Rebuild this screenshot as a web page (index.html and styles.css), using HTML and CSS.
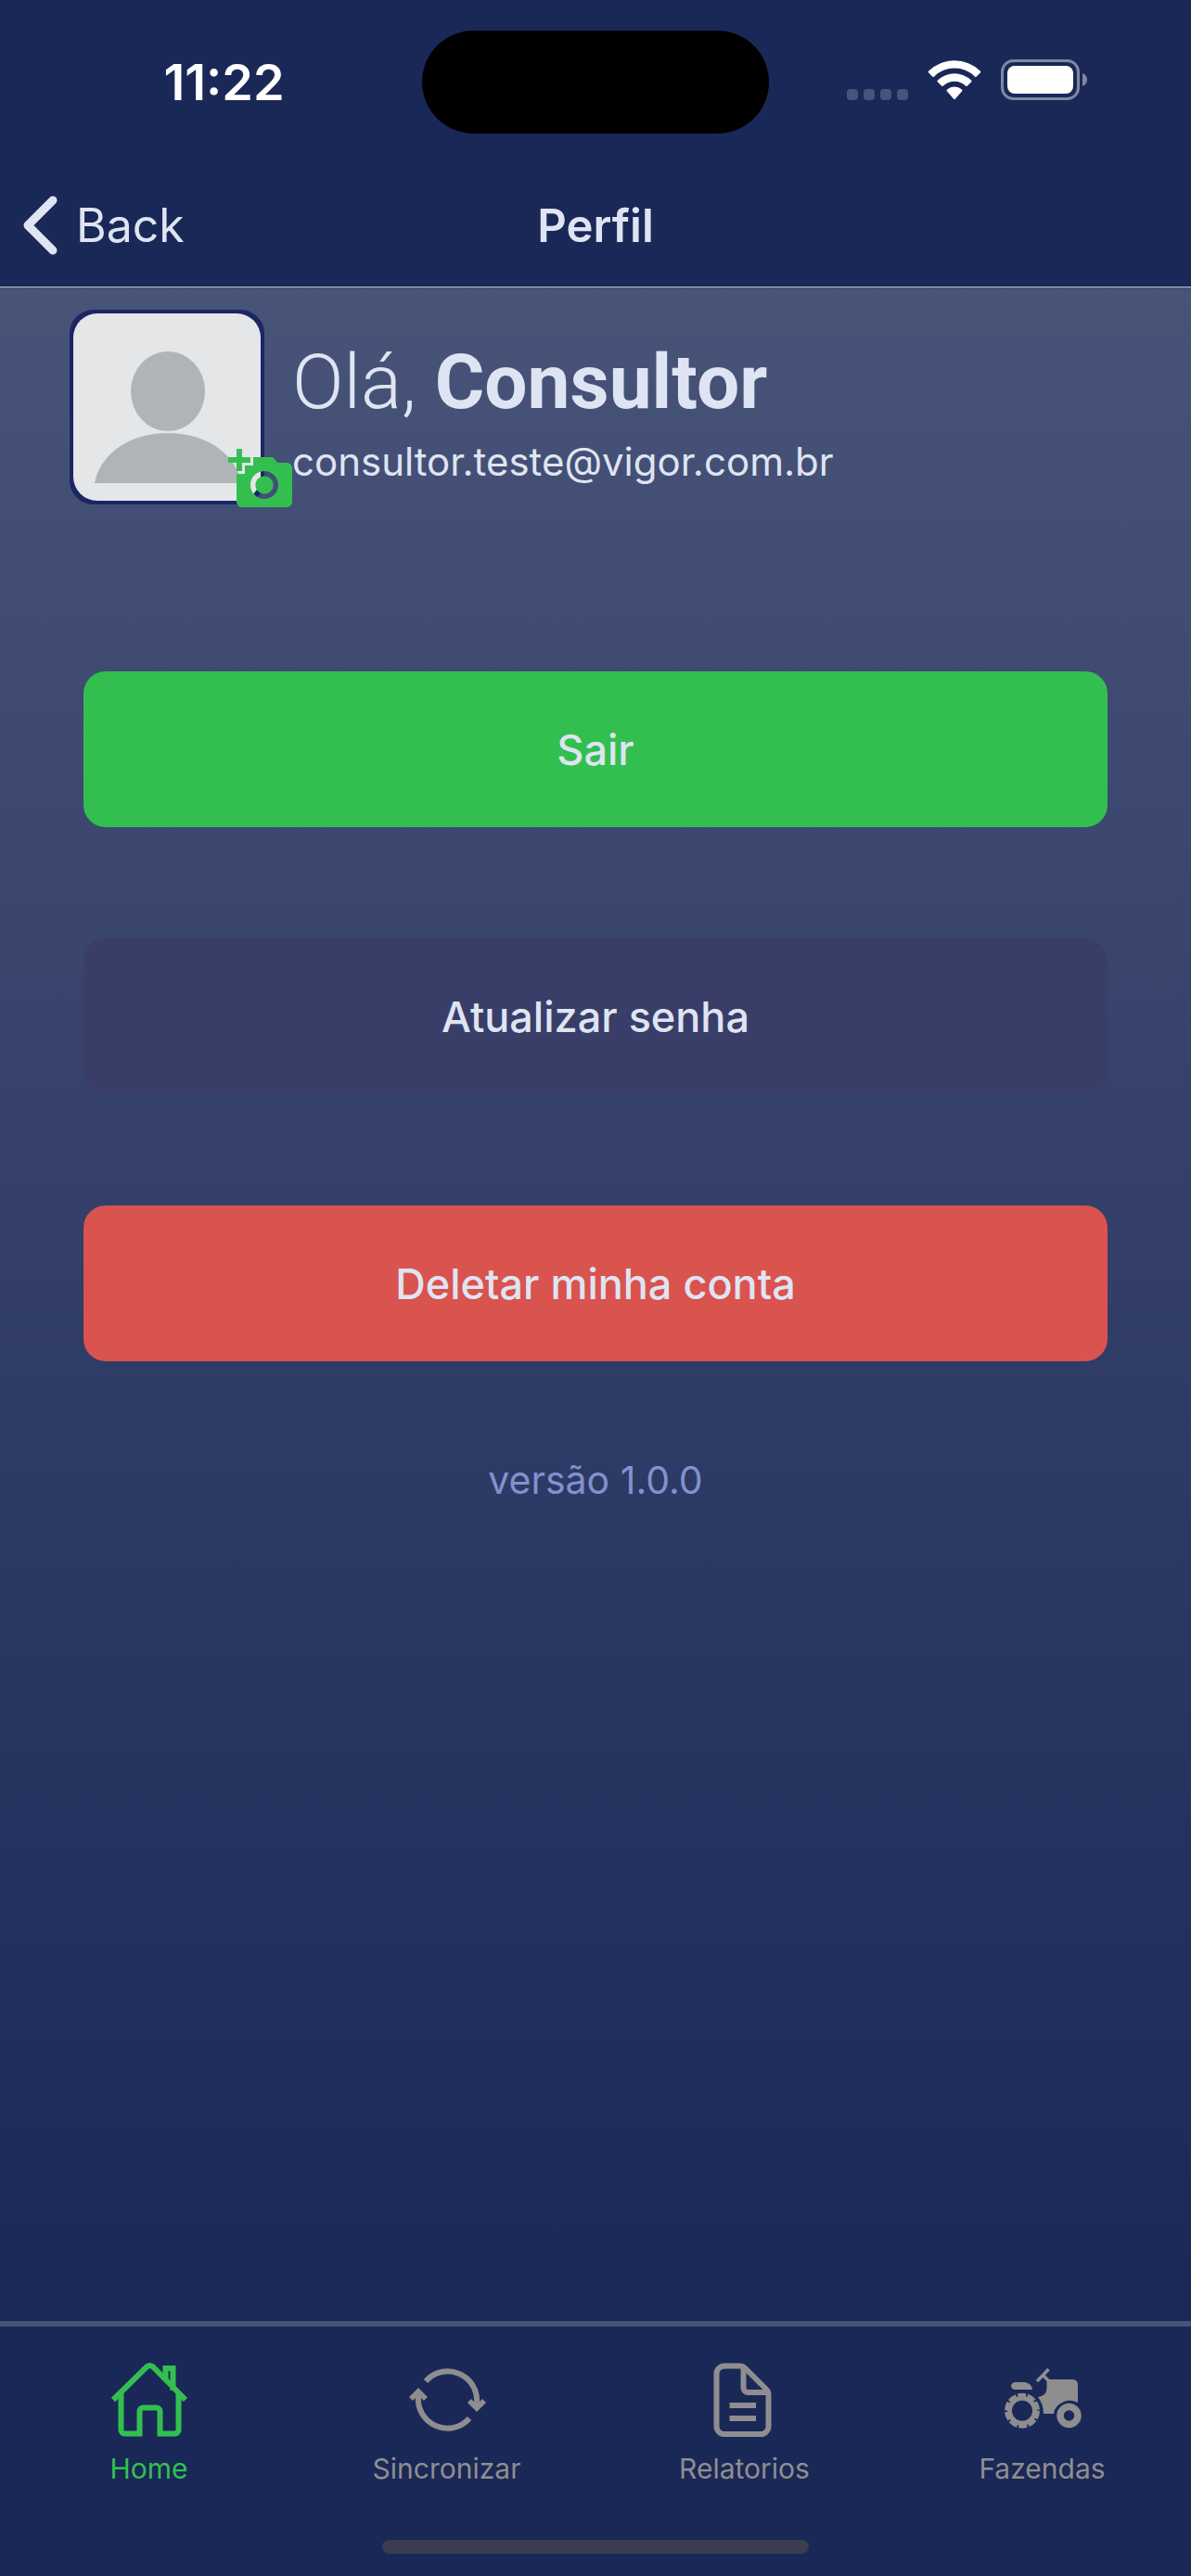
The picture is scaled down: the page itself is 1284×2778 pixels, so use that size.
FILE: index.html
```html
<!DOCTYPE html>
<html lang="pt-BR">
<head>
    <meta charset="UTF-8">
    <meta name="viewport" content="width=device-width, initial-scale=1.0">
    <title>Perfil</title>
    <link rel="stylesheet" href="styles.css">
</head>
<body>
    <header class="header">
        <div class="status-bar">
            <span class="time">11:22</span>
            <div class="island"></div>
            <div class="status-icons">
                <svg class="signal" width="66" height="12" viewBox="0 0 66 12">
                    <rect x="0" width="12" height="12" rx="4"/>
                    <rect x="18" width="12" height="12" rx="4"/>
                    <rect x="36" width="12" height="12" rx="4"/>
                    <rect x="54" width="12" height="12" rx="4"/>
                </svg>
                <svg class="wifi" width="58" height="44" viewBox="0 0 58 44">
                    <path d="M1.200 12.500a40 40 0 0 1 55.600 0q1 1 0 2l-4 4q-1 1-2 0a31 31 0 0 0-43.600 0q-1 1-2 0l-4-4q-1-1 0-2z"/>
                    <path d="M11 22.500a26 26 0 0 1 36 0q1 1 0 2l-4 4q-1 1-2 0a17.500 17.500 0 0 0-24 0q-1 1-2 0l-4-4q-1-1 0-2z"/>
                    <path d="M21 32.500a12 12 0 0 1 16 0q1 1 0 2l-7 8q-1 1-2 0l-7-8q-1-1 0-2z"/>
                </svg>
                <svg class="battery" width="94" height="44" viewBox="0 0 94 44">
                    <rect x="1.500" y="1.500" width="82" height="41" rx="12" class="battery-shell"/>
                    <path d="M88 15q5 2 5 7t-5 7z" class="battery-tip"/>
                    <rect x="7" y="7" width="71" height="30" rx="8"/>
                </svg>
            </div>
        </div>
        <nav class="nav-bar">
            <a href="#" class="back">
                <svg width="38" height="66" viewBox="0 0 38 66"><path d="M33 6L6 33l27 27"/></svg>
                Back
            </a>
            <h1 class="title">Perfil</h1>
        </nav>
    </header>

    <main class="content">
        <section class="profile">
            <div class="avatar">
                <svg class="avatar-picture" viewBox="0 0 202 202">
                    <rect width="202" height="202" fill="#e5e6e8"/>
                    <ellipse cx="102" cy="84" rx="40" ry="43"/>
                    <path d="M23 183C29 151 61 129 102 129s73 22 79 54z"/>
                </svg>
                <button class="photo-btn" aria-label="Alterar foto">
                    <svg width="72" height="72" viewBox="0 0 24 24"><path d="M3 4V1h2v3h3v2H5v3H3V6H0V4h3zm3 6V7h3V4h7l1.830 2H21c1.100 0 2 .9 2 2v12c0 1.100-.9 2-2 2H5c-1.100 0-2-.9-2-2V10h3zm7 9c2.760 0 5-2.240 5-5s-2.240-5-5-5-5 2.240-5 5 2.240 5 5 5zm-3.200-5c0 1.770 1.430 3.200 3.200 3.200s3.200-1.430 3.200-3.200-1.430-3.200-3.200-3.200-3.200 1.430-3.200 3.200z"/></svg>
                </button>
            </div>
            <div class="profile-info">
                <h2 class="greeting">Olá, <strong>Consultor</strong></h2>
                <p class="email">consultor.teste@vigor.com.br</p>
            </div>
        </section>

        <div class="actions">
            <button class="btn btn-green">Sair</button>
            <button class="btn btn-dark">Atualizar senha</button>
            <button class="btn btn-red">Deletar minha conta</button>
        </div>
        <p class="version">versão 1.0.0</p>
    </main>

    <footer class="tab-bar">
        <nav class="tabs">
            <a href="#" class="tab active">
                <svg class="icon" viewBox="0 0 84 84">
                    <path d="M3 42L39.500 6q3-2 6 0L81 42"/>
                    <path d="M11.500 34v40.500a4 4 0 0 0 4 4h16V54.500a4 4 0 0 1 4-4h14a4 4 0 0 1 4 4v24h16a4 4 0 0 0 4-4V34"/>
                    <path d="M59.500 20V8h8v24"/>
                </svg>
                Home
            </a>
            <a href="#" class="tab">
                <svg class="icon" viewBox="0 0 84 84">
                    <path d="M19 22A31.500 31.500 0 0 1 74 46"/>
                    <path d="M66 62A31.500 31.500 0 0 1 11 38"/>
                    <path class="fill" d="M68 41l-4 4 10 10 10-10-4-4-3 3h-6zM17 43l4-4-10-10-10 10 4 4 3-3h6z"/>
                </svg>
                Sincronizar
            </a>
            <a href="#" class="tab">
                <svg class="icon" viewBox="0 0 84 84">
                    <path d="M20 5.500h17q3 0 5 2l23 23q2.500 2.500 2.500 5.500v34.500a8.500 8.500 0 0 1-8.500 8.500H20a8.500 8.500 0 0 1-8.500-8.500V14A8.500 8.500 0 0 1 20 5.500z"/>
                    <path d="M40.500 6v23a5 5 0 0 0 5 5H67M25.500 48H54M25.500 62H54"/>
                </svg>
                Relatorios
            </a>
            <a href="#" class="tab">
                <svg class="icon" viewBox="0 0 84 84">
                    <circle cx="20" cy="53.700" r="13.500" stroke-width="5"/>
                    <circle cx="20" cy="53.700" r="17" stroke-width="4" stroke-dasharray="8.900 1.780"/>
                    <circle cx="70.500" cy="59" r="9.500" stroke-width="7.500"/>
                    <path d="M48.500 9L36 22M43 16l6 6" stroke-width="3.500"/>
                    <path class="fill" d="M12 23h11q7 1 8 8H12q-4-1-4-4t4-4z"/>
                    <path class="fill" d="M46.500 20H74q6 0 6 6v19q-8-4-15-1-10 4-11 13H43q0-10-6-18 9-1 9.500-9z"/>
                </svg>
                Fazendas
            </a>
        </nav>
        <div class="home-indicator"></div>
    </footer>
</body>
</html>
```
FILE: styles.css
```css
/* Global styles */
* {
    box-sizing: border-box;
}

body {
    margin: 0;
    min-height: 100vh;
    display: flex;
    flex-direction: column;
    font-family: Inter, sans-serif;
    color: #dfe4f2;
    background-color: #1a2857;
}

h1, h2, p {
    margin: 0;
}

a {
    color: inherit;
    text-decoration: none;
}

button {
    border: none;
    font-family: inherit;
    color: inherit;
    cursor: pointer;
}

/* Status bar */
.header {
    border-bottom: 1px solid #b9bdcb;
}

.status-bar {
    display: grid;
    grid-template-columns: 1fr auto 1fr;
    align-items: center;
    justify-items: center;
    height: 177px;
    padding: 0 28px;
}

.time {
    font-size: 54px;
    font-weight: 600;
    color: #fff;
}

.island {
    width: 374px;
    height: 111px;
    border-radius: 56px;
    background-color: #000;
}

.status-icons {
    display: flex;
    align-items: flex-end;
    gap: 21px;
    padding-bottom: 6px;
    fill: #fff;
}

.signal {
    fill: #48537a;
}

.battery-shell {
    fill: none;
    stroke: #7f87a3;
    stroke-width: 3;
}

.battery-tip {
    fill: #7f87a3;
}

/* Navigation bar */
.nav-bar {
    display: grid;
    grid-template-columns: 1fr auto 1fr;
    align-items: center;
    height: 132px;
    padding: 0 24px;
}

.back {
    display: flex;
    align-items: center;
    gap: 20px;
    font-size: 50px;
}

.back svg {
    fill: none;
    stroke: #dfe4f2;
    stroke-width: 9;
    stroke-linecap: round;
    stroke-linejoin: round;
}

.title {
    font-size: 49px;
    font-weight: 600;
}

/* Profile */
.content {
    flex: 1;
    padding-top: 24px;
    background: linear-gradient(#485378, #1a2857);
}

.profile {
    display: flex;
    gap: 30px;
    padding: 0 75px;
}

.avatar {
    position: relative;
    width: 210px;
    height: 210px;
    border: 4px solid #1c2666;
    border-radius: 26px;
    background-color: #1c2666;
}

.avatar-picture {
    display: block;
    border-radius: 26px;
    fill: #afb4b8;
}

.photo-btn {
    position: absolute;
    right: -37px;
    bottom: -13px;
    padding: 0;
    background: none;
}

.photo-btn svg {
    display: block;
    fill: #33bf50;
}

.profile-info {
    padding-top: 30px;
}

.greeting {
    font-family: Roboto, sans-serif;
    font-size: 82px;
    font-weight: 300;
    line-height: 96px;
}

.greeting strong {
    font-weight: 700;
}

.email {
    font-size: 42px;
    line-height: 76px;
}

/* Buttons */
.actions {
    display: flex;
    flex-direction: column;
    gap: 120px;
    padding: 180px 90px 0;
}

.btn {
    height: 168px;
    border-radius: 24px;
    font-size: 45px;
    font-weight: 500;
}

.btn-green {
    background-color: #33bf50;
}

.btn-dark {
    background-color: #393e69;
}

.btn-red {
    background-color: #d9534f;
}

.version {
    margin-top: 96px;
    font-size: 41px;
    line-height: 64px;
    text-align: center;
    color: #8490cf;
}

/* Tab bar */
.tab-bar {
    border-top: 6px solid #48537a;
    padding: 37px 0 24px;
}

.tabs {
    display: grid;
    grid-template-columns: repeat(4, 1fr);
}

.tab {
    display: flex;
    flex-direction: column;
    align-items: center;
    gap: 12px;
    font-size: 30px;
    line-height: 40px;
    color: #8e8e8f;
}

.tab.active {
    color: #33bf50;
}

.icon {
    width: 84px;
    height: 84px;
    fill: none;
    stroke: currentColor;
    stroke-width: 6;
}

.icon .fill {
    fill: currentColor;
    stroke: none;
}

.home-indicator {
    width: 460px;
    height: 15px;
    margin: 57px auto 0;
    border-radius: 8px;
    background-color: #393d4f;
}
```
